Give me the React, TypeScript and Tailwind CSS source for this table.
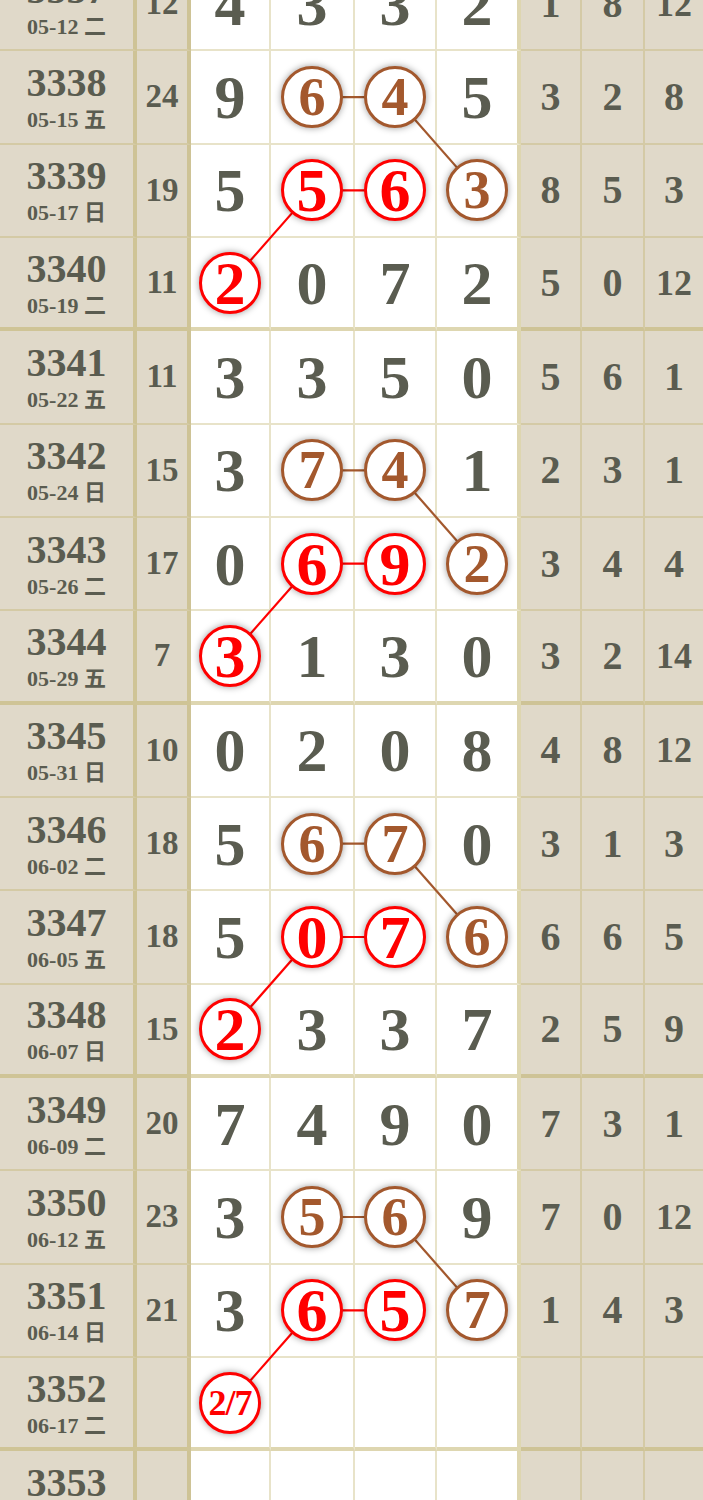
import React from "react";

type Row = {
  issue: number;
  date: string;
  wd: string;
  sum: string;
  d: string[];
  r: string[];
};

const rows: Row[] = [
  { issue: 3337, date: "05-12", wd: "二", sum: "12", d: ["4", "3", "3", "2"], r: ["1", "8", "12"] },
  { issue: 3338, date: "05-15", wd: "五", sum: "24", d: ["9", "6", "4", "5"], r: ["3", "2", "8"] },
  { issue: 3339, date: "05-17", wd: "日", sum: "19", d: ["5", "5", "6", "3"], r: ["8", "5", "3"] },
  { issue: 3340, date: "05-19", wd: "二", sum: "11", d: ["2", "0", "7", "2"], r: ["5", "0", "12"] },
  { issue: 3341, date: "05-22", wd: "五", sum: "11", d: ["3", "3", "5", "0"], r: ["5", "6", "1"] },
  { issue: 3342, date: "05-24", wd: "日", sum: "15", d: ["3", "7", "4", "1"], r: ["2", "3", "1"] },
  { issue: 3343, date: "05-26", wd: "二", sum: "17", d: ["0", "6", "9", "2"], r: ["3", "4", "4"] },
  { issue: 3344, date: "05-29", wd: "五", sum: "7", d: ["3", "1", "3", "0"], r: ["3", "2", "14"] },
  { issue: 3345, date: "05-31", wd: "日", sum: "10", d: ["0", "2", "0", "8"], r: ["4", "8", "12"] },
  { issue: 3346, date: "06-02", wd: "二", sum: "18", d: ["5", "6", "7", "0"], r: ["3", "1", "3"] },
  { issue: 3347, date: "06-05", wd: "五", sum: "18", d: ["5", "0", "7", "6"], r: ["6", "6", "5"] },
  { issue: 3348, date: "06-07", wd: "日", sum: "15", d: ["2", "3", "3", "7"], r: ["2", "5", "9"] },
  { issue: 3349, date: "06-09", wd: "二", sum: "20", d: ["7", "4", "9", "0"], r: ["7", "3", "1"] },
  { issue: 3350, date: "06-12", wd: "五", sum: "23", d: ["3", "5", "6", "9"], r: ["7", "0", "12"] },
  { issue: 3351, date: "06-14", wd: "日", sum: "21", d: ["3", "6", "5", "7"], r: ["1", "4", "3"] },
  { issue: 3352, date: "06-17", wd: "二", sum: "", d: ["2/7", "", "", ""], r: ["", "", ""] },
  { issue: 3353, date: "06-19", wd: "五", sum: "", d: ["", "", "", ""], r: ["", "", ""] },
];

const circles: Record<string, "brown" | "red"> = {
  "3338-1": "brown", "3338-2": "brown", "3339-3": "brown",
  "3339-1": "red", "3339-2": "red", "3340-0": "red",
  "3342-1": "brown", "3342-2": "brown", "3343-3": "brown",
  "3343-1": "red", "3343-2": "red", "3344-0": "red",
  "3346-1": "brown", "3346-2": "brown", "3347-3": "brown",
  "3347-1": "red", "3347-2": "red", "3348-0": "red",
  "3350-1": "brown", "3350-2": "brown", "3351-3": "brown",
  "3351-1": "red", "3351-2": "red", "3352-0": "red",
};

const ROW_H = 93.33;
const XC = [230, 312, 395, 477];
const yc = (i: number) => i * ROW_H + 45.7;

const BROWN = "#a3582d";
const RED = "#ff0000";

function Circle({ v, kind }: { v: string; kind: "brown" | "red" }) {
  const small = v.length > 1;
  if (kind === "brown") {
    return (
      <div className="relative z-10 flex h-[62px] w-[62px] items-center justify-center rounded-full border-[3px] border-[#a3582d] bg-white text-[54px] leading-none text-[#a3582d] shadow-[0_0_7px_rgba(0,0,0,0.4)]">
        {v}
      </div>
    );
  }
  return (
    <div
      className={
        small
          ? "relative z-10 flex h-[62px] w-[62px] items-center justify-center rounded-full border-[3px] border-[#ff0000] bg-white text-[36px] leading-none tracking-[-1px] text-[#ff0000] shadow-[0_0_7px_rgba(0,0,0,0.4)]"
          : "relative z-10 flex h-[62px] w-[62px] items-center justify-center rounded-full border-[3px] border-[#ff0000] bg-white text-[62px] leading-none text-[#ff0000] shadow-[0_0_7px_rgba(0,0,0,0.4)]"
      }
    >
      {v}
    </div>
  );
}

function TableRow({ row }: { row: Row }) {
  const thick = (row.issue - 3336) % 4 === 0;
  const bB = thick
    ? "border-b-4 border-b-[rgba(190,175,100,0.5)]"
    : "border-b-2 border-b-[rgba(190,175,100,0.35)]";
  const rThick = "border-r-4 border-r-[rgba(190,175,100,0.5)]";
  const rThin = "border-r-2 border-r-[rgba(190,175,100,0.35)]";
  const beige = "bg-[#e0d9c9] flex items-center justify-center";
  const white = "bg-white flex items-center justify-center";

  return (
    <div className="grid h-[93.33px] grid-cols-[137px_54px_80px_84px_82px_84px_61px_63px_58px]">
      <div className={`${beige} ${bB} ${rThick} flex-col`}>
        <div className="text-[40px] leading-[44px]">{row.issue}</div>
        <div className="mt-[2px] text-[22px] leading-[26px]">
          {row.date} {row.wd}
        </div>
      </div>
      <div className={`${beige} ${bB} ${rThick} text-[33px] leading-none`}>{row.sum}</div>
      {row.d.map((v, c) => {
        const kind = circles[`${row.issue}-${c}`];
        const r = c === 3 ? rThick : rThin;
        return (
          <div key={c} className={`${white} ${bB} ${r}`}>
            {kind ? <Circle v={v} kind={kind} /> : <span className="text-[62px] leading-none">{v}</span>}
          </div>
        );
      })}
      {row.r.map((v, c) => {
        const r = c === 2 ? "" : rThin;
        const size = v.length > 1 ? "text-[36px]" : "text-[40px]";
        return (
          <div key={c} className={`${beige} ${bB} ${r}`}>
            <span className={`${size} leading-none`}>{v}</span>
          </div>
        );
      })}
    </div>
  );
}

export default function App() {
  const lines: { x1: number; y1: number; x2: number; y2: number; color: string }[] = [];
  [1, 5, 9, 13].forEach((b) => {
    lines.push({ x1: XC[1], y1: yc(b), x2: XC[2], y2: yc(b), color: BROWN });
    lines.push({ x1: XC[2], y1: yc(b), x2: XC[3], y2: yc(b + 1), color: BROWN });
    lines.push({ x1: XC[1], y1: yc(b + 1), x2: XC[2], y2: yc(b + 1), color: RED });
    lines.push({ x1: XC[1], y1: yc(b + 1), x2: XC[0], y2: yc(b + 2), color: RED });
  });

  return (
    <div className="h-[1500px] w-[703px] overflow-hidden bg-[#e0d9c9] font-['Liberation_Serif','Noto_Sans_CJK_SC',serif] font-bold text-[#5a5c50]">
      <div className="relative mt-[-42px]">
        {rows.map((row) => (
          <TableRow key={row.issue} row={row} />
        ))}
        <svg className="pointer-events-none absolute left-0 top-0 z-[5]" width="703" height={rows.length * ROW_H}>
          {lines.map((l, i) => (
            <line key={i} x1={l.x1} y1={l.y1} x2={l.x2} y2={l.y2} stroke={l.color} strokeWidth="2.2" />
          ))}
        </svg>
      </div>
    </div>
  );
}
